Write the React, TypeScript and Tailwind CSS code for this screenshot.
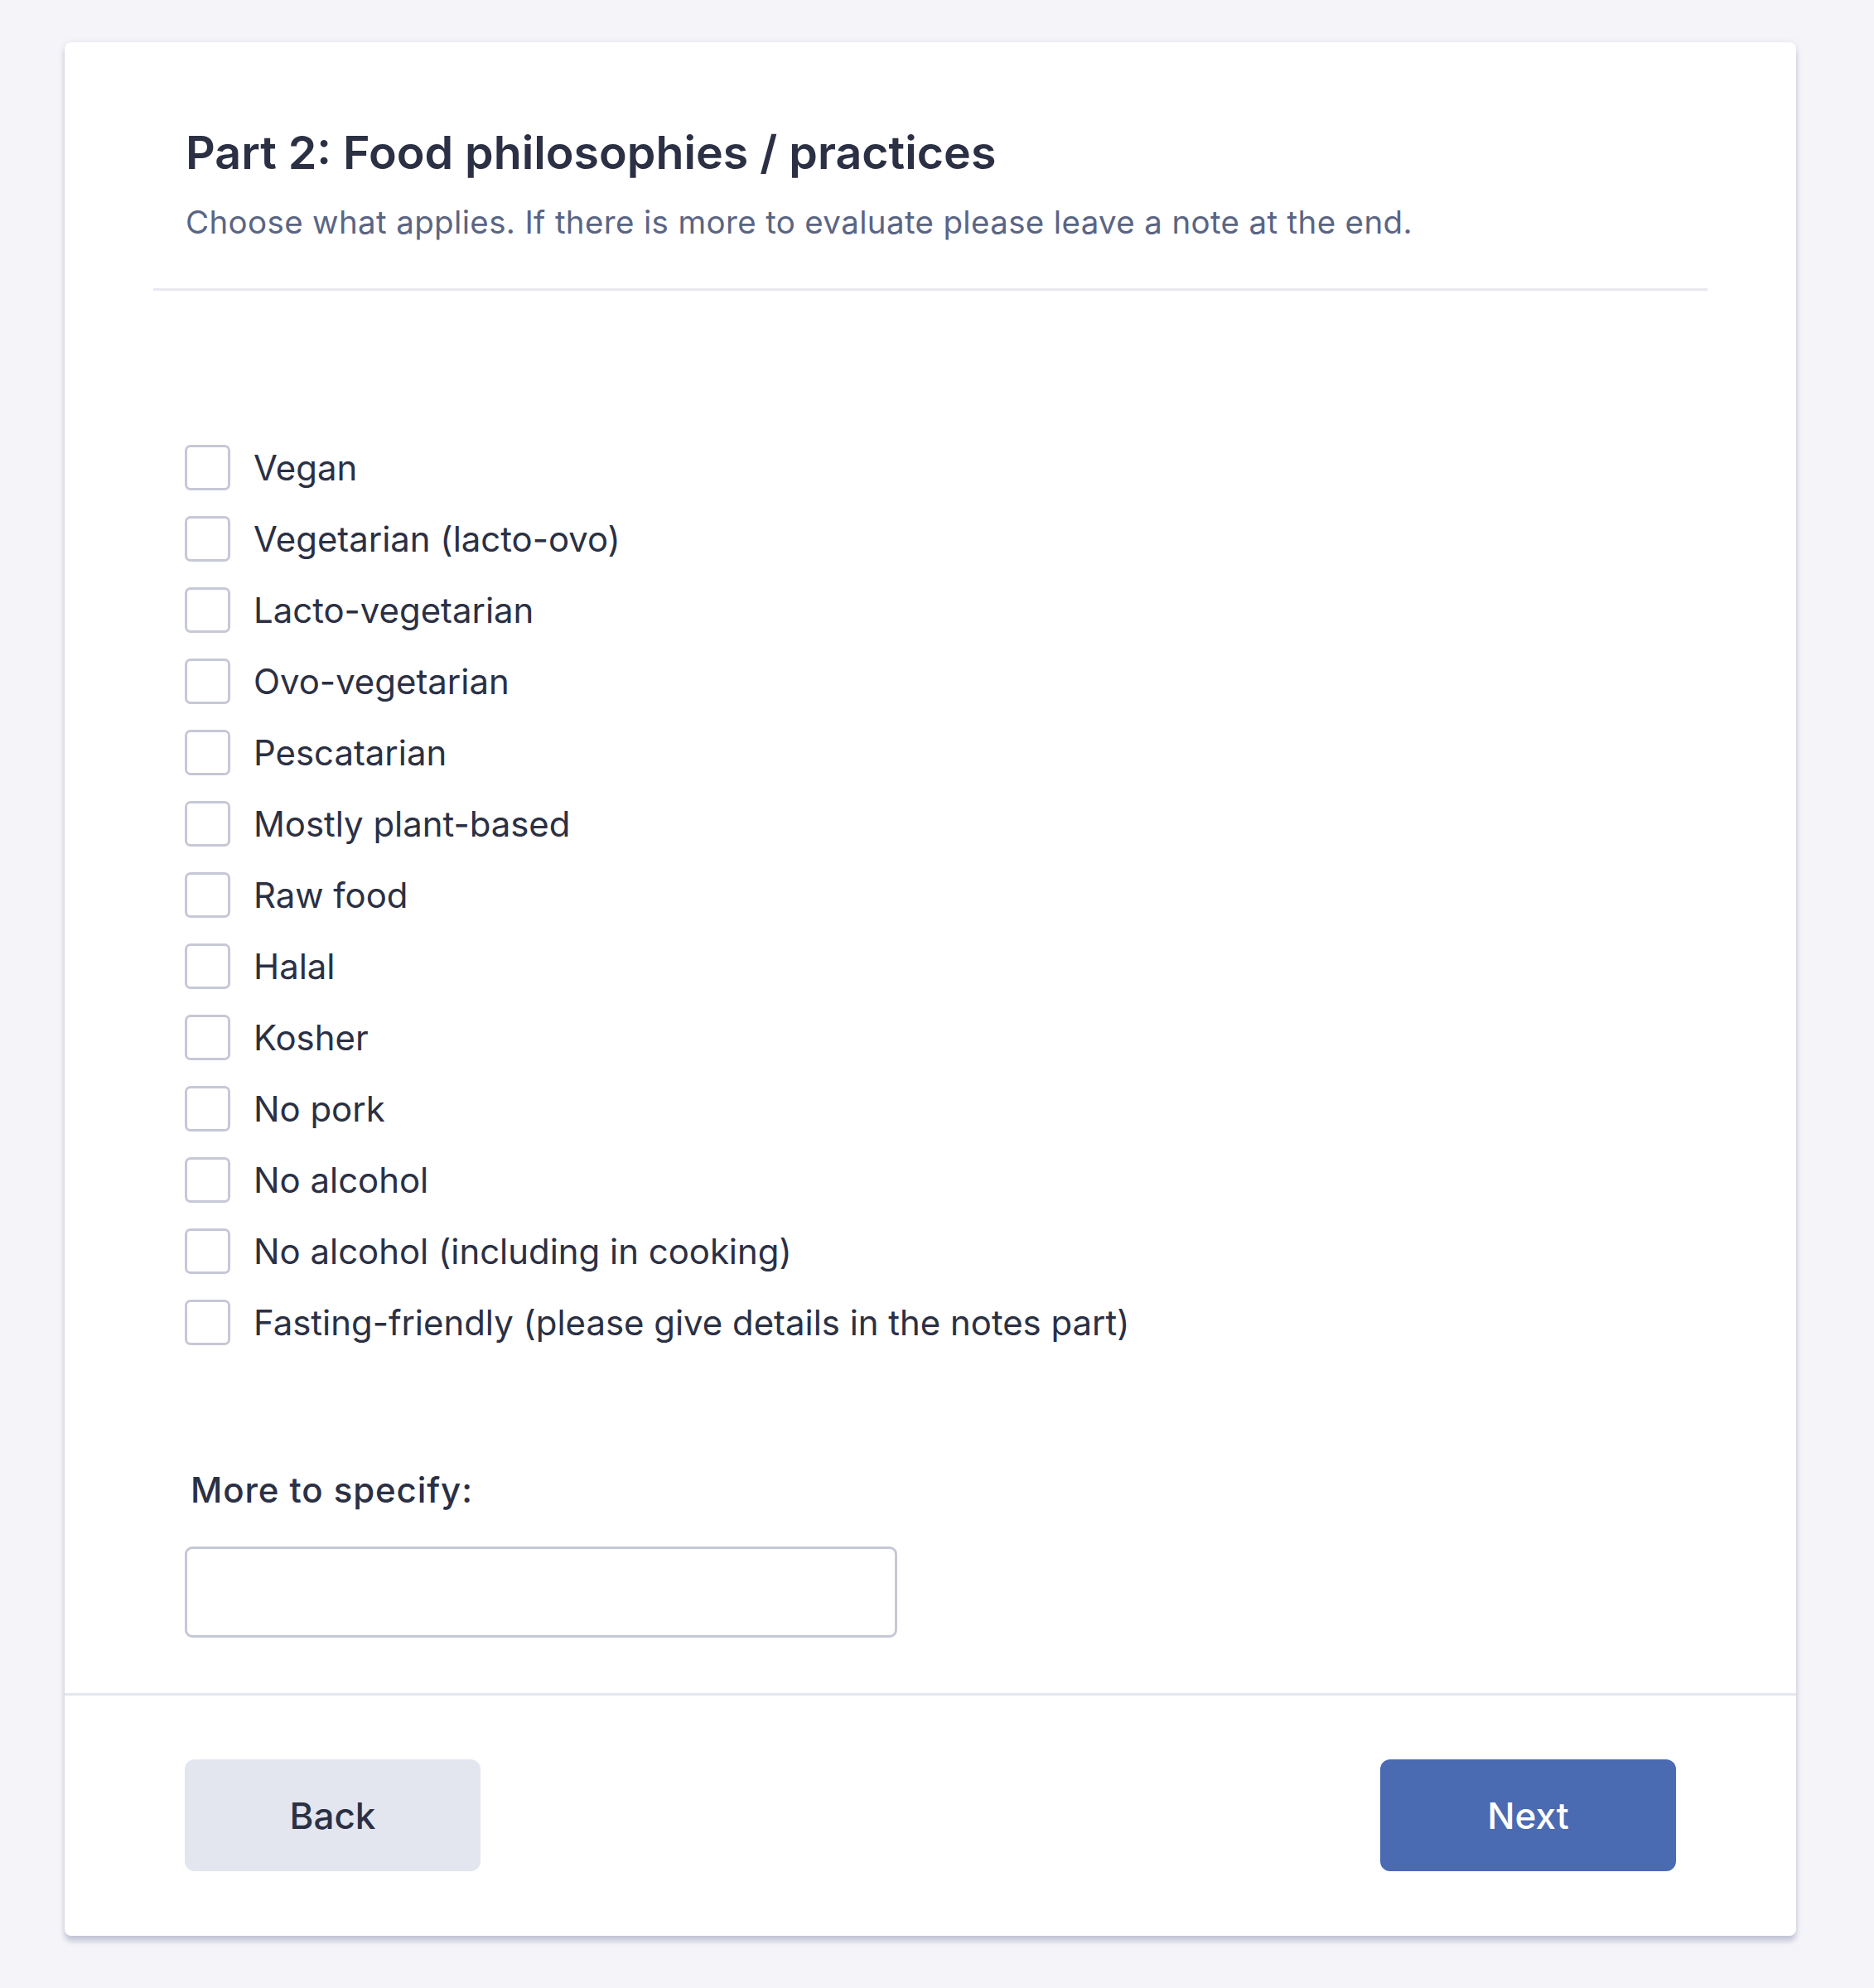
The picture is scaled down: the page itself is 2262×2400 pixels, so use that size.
import { useState } from 'react';

const options = [
  'Vegan',
  'Vegetarian (lacto-ovo)',
  'Lacto-vegetarian',
  'Ovo-vegetarian',
  'Pescatarian',
  'Mostly plant-based',
  'Raw food',
  'Halal',
  'Kosher',
  'No pork',
  'No alcohol',
  'No alcohol (including in cooking)',
  'Fasting-friendly (please give details in the notes part)'
];

const App = () => {
  const [checked, setChecked] = useState<Record<string, boolean>>({});
  const [note, setNote] = useState('');

  return (
    <div className="min-h-[2400px] bg-[#f5f5f9] pt-[51px] font-['Inter','Noto_Sans',sans-serif] text-[#2b3044]">
      <div className="ml-[78px] flex w-[2090px] flex-col rounded-[8px] bg-white shadow-[0_7px_6px_rgba(90,98,140,0.28),0_0_8px_rgba(90,98,140,0.12)]">
        <header className="px-[146px] pt-[99px] pb-[57px]">
          <h1 className="text-[55.5px] font-semibold leading-[68px] text-[#2b3044]">
            Part 2: Food philosophies / practices
          </h1>
          <p className="mt-[27px] text-[38.5px] leading-[46px] tracking-[0.35px] text-[#5a6584]">
            Choose what applies. If there is more to evaluate please leave a note at the end.
          </p>
        </header>
        <div className="mx-[107px] h-[3px] bg-[#e8e9f0]" />

        <section className="px-[145px] pt-[186px] pb-[67px]">
          <ul className="flex flex-col gap-[31px]">
            {options.map((label) => (
              <li key={label}>
                <label className="flex cursor-pointer items-center gap-[28px]">
                  <input
                    type="checkbox"
                    className="peer sr-only"
                    checked={!!checked[label]}
                    onChange={(e) => setChecked((c) => ({ ...c, [label]: e.target.checked }))}
                  />
                  <span className="h-[55px] w-[55px] shrink-0 rounded-[7px] border-[3px] border-[#c6c8d6] bg-white peer-checked:border-[#4a6ab1] peer-checked:bg-[#4a6ab1]" />
                  <span className="text-[41.9px] leading-[55px] text-[#2b3044]">{label}</span>
                </label>
              </li>
            ))}
          </ul>

          <label
            htmlFor="more"
            className="mt-[150px] ml-[7px] block text-[42px] font-medium leading-[50px] tracking-[0.9px] text-[#2b3044]"
          >
            More to specify:
          </label>
          <input
            id="more"
            type="text"
            value={note}
            onChange={(e) => setNote(e.target.value)}
            className="mt-[43px] block h-[110px] w-[860px] rounded-[9px] border-[3px] border-[#c6c8d6] bg-white px-[24px] text-[42px] outline-none"
          />
        </section>

        <footer className="flex items-center justify-between border-t-[3px] border-[#e5e7ef] px-[145px] pt-[77px] pb-[78px]">
          <button className="h-[135px] w-[357px] rounded-[12px] bg-[#e3e6ef] text-[44px] font-medium text-[#2b3044]">
            Back
          </button>
          <button className="h-[135px] w-[357px] rounded-[12px] bg-[#4a6ab1] text-[44px] font-medium text-white">
            Next
          </button>
        </footer>
      </div>
    </div>
  );
};

export default App;
